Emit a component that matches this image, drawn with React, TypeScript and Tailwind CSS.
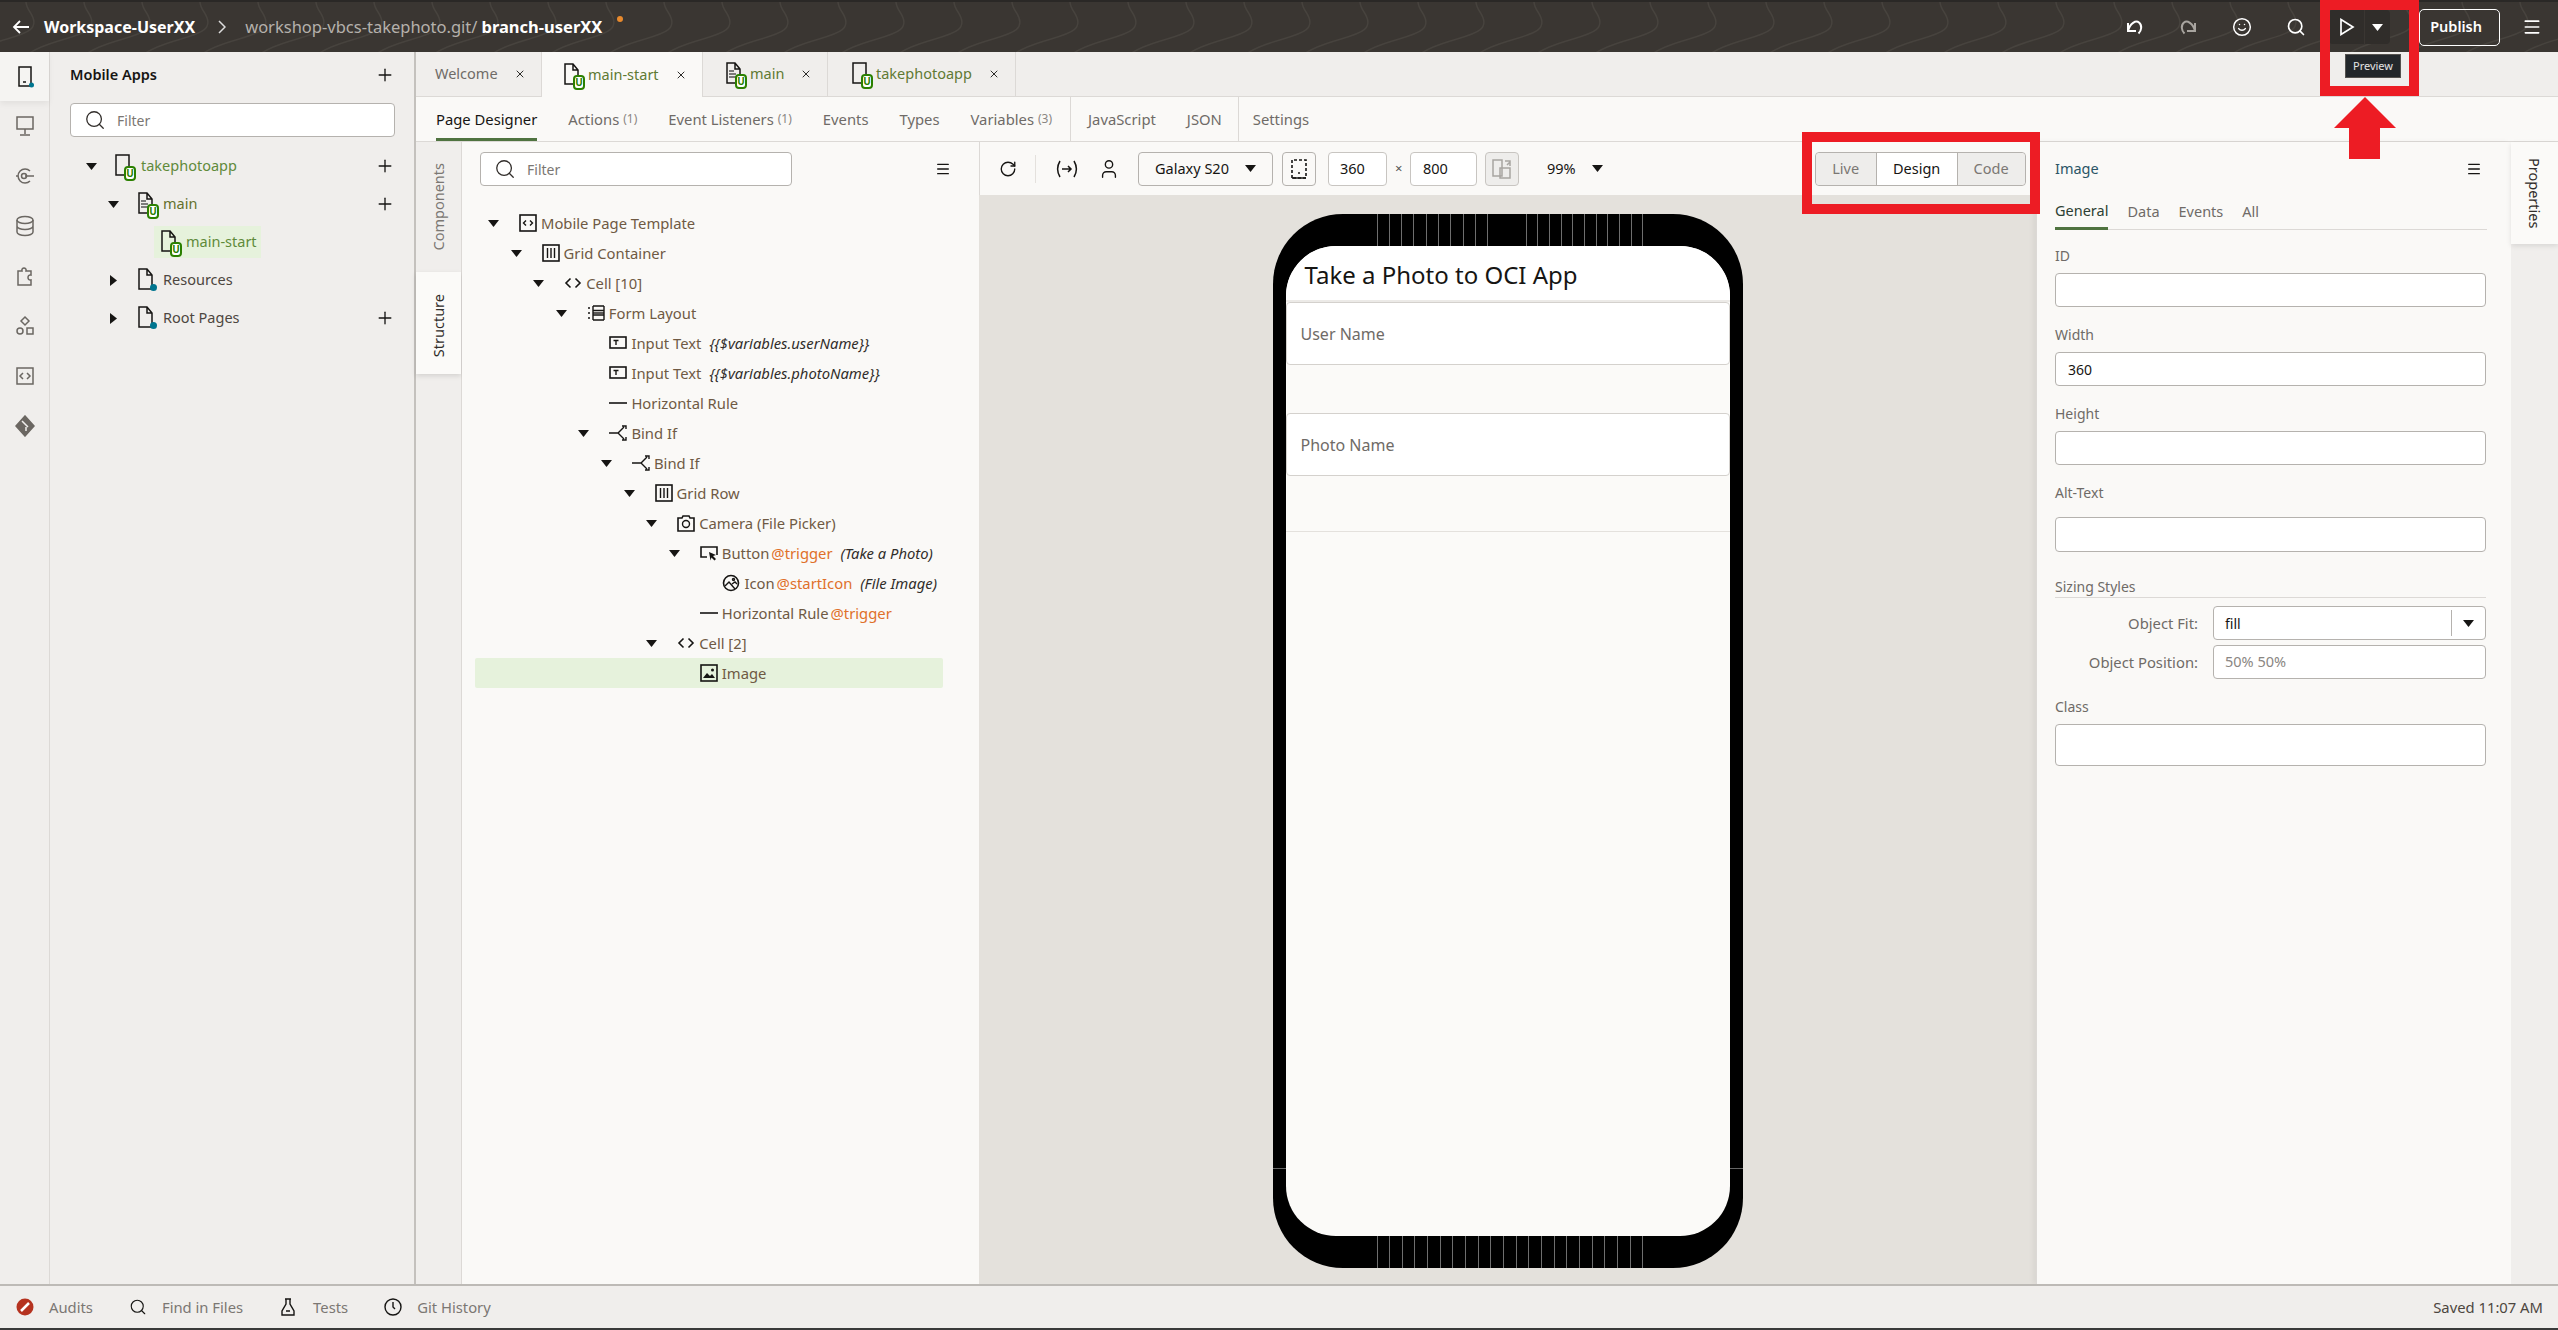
// App.tsx - Visual Builder page designer
import { Search, Plus, X, Menu, Smile, RotateCw, User } from "lucide-react";
import type { ReactNode } from "react";

const font = { fontFamily: '"Noto Sans", sans-serif' };

const CaretDown = ({ className = "" }: { className?: string }) => (
  <svg width="11" height="7" viewBox="0 0 11 7" className={className}>
    <path d="M0 0h11L5.5 7z" fill="#161513" />
  </svg>
);

const CaretRight = () => (
  <svg width="7" height="11" viewBox="0 0 7 11">
    <path d="M0 0l7 5.500L0 11z" fill="#161513" />
  </svg>
);

const GitBadge = () => (
  <svg width="12" height="15" viewBox="0 0 12 15" className="absolute -right-[5px] -bottom-[3px]">
    <rect x="1" y="1" width="10" height="13" rx="3" fill="#fff" stroke="#2b8000" strokeWidth="2" />
    <text x="6" y="11" textAnchor="middle" fontSize="10" fontWeight="700" fill="#2b8000" fontFamily="Noto Sans">
      U
    </text>
  </svg>
);

const PageIcon = ({ kind }: { kind: "phone" | "page" | "lines" | "folder" }) => (
  <span className="relative inline-block h-[24px] w-[16px] shrink-0">
    <svg width="15" height="22" viewBox="0 0 15 22" fill="none" stroke="#161513" strokeWidth="1.500">
      {kind === "phone" && <rect x="1" y="1" width="13" height="20" />}
      {kind !== "phone" && <path d="M1 1h8l5 6v14H1zM9 1v6h5" />}
      {kind === "lines" && <path d="M3 9h5M3 12h7M3 15h7" stroke="#555" />}
    </svg>
    {kind === "folder" ? (
      <span className="absolute -right-[3px] bottom-[1px] h-[7px] w-[7px] rounded-full bg-[#00758f]" />
    ) : (
      <GitBadge />
    )}
  </span>
);

// icons of the structure tree, 18px box
const TreeIcon = ({ name }: { name: string }) => {
  const s = { fill: "none", stroke: "#161513", strokeWidth: 1.4 };
  return (
    <svg width="18" height="18" viewBox="0 0 18 18" className="shrink-0">
      {name === "template" && (
        <g {...s}>
          <rect x="1" y="1" width="16" height="16" strokeWidth="1.600" />
          <path d="M7 6.500L4.500 9 7 11.500M11 6.500L13.500 9 11 11.500" />
        </g>
      )}
      {name === "grid" && (
        <g {...s}>
          <rect x="1" y="1" width="16" height="16" strokeWidth="1.600" />
          <path d="M5.500 4v10M9 4v10M12.500 4v10" />
        </g>
      )}
      {name === "cell" && (
        <g {...s} strokeWidth="1.600">
          <path d="M6.500 4.500L2 9l4.500 4.500M11.500 4.500L16 9l-4.500 4.500" />
        </g>
      )}
      {name === "form" && (
        <g {...s}>
          <path d="M6 2h11M6 6.500h11M6 11h11M6 16h11M6 2v14M17 2v14M1 4h2M1 9h2M1 14h2" />
          <path d="M6 9h11" />
        </g>
      )}
      {name === "input" && (
        <g {...s}>
          <rect x="1" y="3" width="16" height="11" strokeWidth="1.600" />
          <path d="M4.500 6.500h5M7 6.500v4.500" />
        </g>
      )}
      {name === "rule" && <path d="M0 9h18" stroke="#161513" strokeWidth="1.600" />}
      {name === "bind" && (
        <g {...s}>
          <path d="M0 9h9l6-6M9 9l6 6M13 2h4v3M13 16h4v-3" />
        </g>
      )}
      {name === "camera" && (
        <g {...s}>
          <path d="M1 4h4l1-2h6l1 2h4v13H1z" strokeWidth="1.600" />
          <circle cx="9" cy="10" r="3.500" />
        </g>
      )}
      {name === "button" && (
        <g {...s}>
          <path d="M7 13H1V3h16v8" strokeWidth="1.600" />
          <path d="M9 8l7 3-3 1 3 3-1.500 1.500-3-3-1 3z" fill="#161513" stroke="none" />
        </g>
      )}
      {name === "icon" && (
        <g {...s}>
          <circle cx="9" cy="9" r="7.500" strokeWidth="1.600" />
          <path d="M3 12l4-4 6 7M10 10l3-2 2 2" />
          <circle cx="11.500" cy="5.500" r="1" />
        </g>
      )}
      {name === "image" && (
        <g>
          <rect x="1" y="1" width="16" height="16" {...s} strokeWidth="1.600" />
          <path d="M3 14l4-5 3 3 2-2 3 4z" fill="#161513" />
          <circle cx="12.500" cy="6" r="1.500" fill="#161513" />
        </g>
      )}
    </svg>
  );
};

type Node = { level: number; icon: string; label: string; at?: string; note?: string; caret?: boolean; selected?: boolean };

const nodes: Node[] = [
  { level: 0, icon: "template", label: "Mobile Page Template", caret: true },
  { level: 1, icon: "grid", label: "Grid Container", caret: true },
  { level: 2, icon: "cell", label: "Cell [10]", caret: true },
  { level: 3, icon: "form", label: "Form Layout", caret: true },
  { level: 4, icon: "input", label: "Input Text", note: "{{$variables.userName}}" },
  { level: 4, icon: "input", label: "Input Text", note: "{{$variables.photoName}}" },
  { level: 4, icon: "rule", label: "Horizontal Rule" },
  { level: 4, icon: "bind", label: "Bind If", caret: true },
  { level: 5, icon: "bind", label: "Bind If", caret: true },
  { level: 6, icon: "grid", label: "Grid Row", caret: true },
  { level: 7, icon: "camera", label: "Camera (File Picker)", caret: true },
  { level: 8, icon: "button", label: "Button", at: "@trigger", note: "(Take a Photo)", caret: true },
  { level: 9, icon: "icon", label: "Icon", at: "@startIcon", note: "(File Image)" },
  { level: 8, icon: "rule", label: "Horizontal Rule", at: "@trigger" },
  { level: 7, icon: "cell", label: "Cell [2]", caret: true },
  { level: 8, icon: "image", label: "Image", selected: true },
];

const TreeRow = ({ node }: { node: Node }) => (
  <div
    className={`flex h-[30px] items-center rounded-[2px] text-[14.800px] text-[#6f5a44] ${node.selected ? "bg-[#e6f2dc]" : ""}`}
    style={{ paddingLeft: 13 + node.level * 22.600 }}
  >
    <span className="flex w-[31px] shrink-0 items-center">{node.caret && <CaretDown />}</span>
    <TreeIcon name={node.icon} />
    <span className="ml-[4px]">{node.label}</span>
    {node.at && <span className="ml-[2px] text-[#e0702a]">{node.at}</span>}
    {node.note && <span className="ml-[8px] italic text-[#312d2a]">{node.note}</span>}
  </div>
);

const FilterBox = ({ className }: { className: string }) => (
  <div className={`flex items-center rounded-[4px] border border-[#b5b2ae] bg-white pl-[13px] ${className}`}>
    <Search size={22} strokeWidth={1.400} className="text-[#312d2a]" />
    <span className="ml-[11px] text-[14px] text-[#7b7773]">Filter</span>
  </div>
);

const tabs = [
  { label: "Welcome", width: "w-[126px] pl-[19px]", textColor: "text-[#6f6b67]" },
  { label: "main-start", width: "w-[161px] pl-[22px]", kind: "page" as const, active: true },
  { label: "main", width: "w-[125px] pl-[23px]", kind: "lines" as const },
  { label: "takephotoapp", width: "w-[188px] pl-[24px]", kind: "phone" as const },
];

const subTabs = [
  { label: "Page Designer", active: true },
  { label: "Actions", count: "(1)" },
  { label: "Event Listeners", count: "(1)" },
  { label: "Events" },
  { label: "Types" },
  { label: "Variables", count: "(3)" },
];

const RailIcon = ({ children, active }: { children: ReactNode; active?: boolean }) => (
  <div className={`relative flex items-center justify-center ${active ? "h-[49px] bg-[#f5f4f2] shadow-[0_3px_6px_rgba(0,0,0,0.06)]" : "h-[50px]"}`}>
    <svg width="20" height="22" viewBox="0 0 20 22" fill="none" stroke={active ? "#161513" : "#6b6762"} strokeWidth="1.500">
      {children}
    </svg>
  </div>
);

const Field = ({ label, value, labelClass = "mt-[16px] mb-[7px]", boxClass = "h-[34px]" }: { label: string; value?: string; labelClass?: string; boxClass?: string }) => (
  <div>
    <div className={`flex h-[22px] items-center text-[14px] text-[#6f6b67] ${labelClass}`}>{label}</div>
    <div className={`flex items-center rounded-[4px] border border-[#b5b2ae] bg-white pl-[12px] text-[14px] text-[#161513] ${boxClass}`}>{value}</div>
  </div>
);

const StatusItem = ({ icon, label, className }: { icon: ReactNode; label: string; className: string }) => (
  <div className={`flex items-center ${className}`}>
    <span className="flex w-[33px] items-center">{icon}</span>
    <span className="text-[14.800px] text-[#7b7773]">{label}</span>
  </div>
);

const Grill = ({ count, width }: { count: number; width: string }) => (
  <div className={`flex h-full justify-between ${width}`}>
    {Array.from({ length: count }).map((_, i) => (
      <span key={i} className="h-full w-px bg-[#6e6e6e]" />
    ))}
  </div>
);

export default function App() {
  return (
    <div className="relative flex h-[1330px] w-[2558px] flex-col overflow-hidden bg-[#f0eeec] text-[#161513]" style={font}>
      {/* Header */}
      <header className="relative flex h-[52px] shrink-0 items-center overflow-hidden border-t-2 border-[#2a2826] bg-[#3a3632] text-white">
        <svg className="absolute inset-0" width="2558" height="52" fill="none" stroke="#47433e" strokeWidth="1.500">
          {Array.from({ length: 46 }).map((_, i) => (
            <path key={i} d={`M${i * 58 - 40} 60 C${i * 58 - 10} 30 ${i * 58 + 50} 40 ${i * 58 + 30} 10 S${i * 58 + 70} -10 ${i * 58 + 100} -10`} />
          ))}
        </svg>
        <div className="relative flex w-full items-center">
          <svg width="20" height="20" viewBox="0 0 20 20" fill="none" stroke="#fff" strokeWidth="1.800" className="ml-[11px]">
            <path d="M18 10H3M9 4l-6 6 6 6" />
          </svg>
          <span className="ml-[13px] text-[16px] font-bold">Workspace-UserXX</span>
          <svg width="8" height="14" viewBox="0 0 8 14" fill="none" stroke="#ddd" strokeWidth="1.500" className="ml-[23px]">
            <path d="M1 1l6 6-6 6" />
          </svg>
          <span className="ml-[19px] text-[16.500px] text-[#b5b1ac]">workshop-vbcs-takephoto.git/</span>
          <span className="ml-[4px] text-[16.500px] font-bold">branch-userXX</span>
          <span className="mb-[16px] ml-[15px] h-[6px] w-[6px] rounded-full bg-[#e88a2d]" />

          <div className="ml-auto flex items-center">
            <svg width="20" height="20" viewBox="0 0 20 20" fill="none" stroke="#fff" strokeWidth="2">
              <path d="M3 6v8h8M3 14C5 6 11 3 14 5.500c3.500 3 2.500 8-.5 11" />
            </svg>
            <svg width="20" height="20" viewBox="0 0 20 20" fill="none" stroke="#a8a49f" strokeWidth="2" className="ml-[33px]">
              <path d="M17 6v8H9M17 14C15 6 9 3 6 5.500c-3.500 3-2.500 8 .5 11" />
            </svg>
            <Smile size={20} strokeWidth={1.800} className="ml-[34px] text-white" />
            <Search size={20} strokeWidth={2} className="ml-[34px] text-white" />
            <div className="ml-[23px] flex h-[34px] w-[35px] items-center justify-center rounded-l-[4px] bg-[#302d2a]">
              <svg width="16" height="18" viewBox="0 0 16 18" fill="none" stroke="#fff" strokeWidth="1.700">
                <path d="M2 1.500L14 9 2 16.500z" />
              </svg>
            </div>
            <div className="ml-px flex h-[34px] w-[25px] items-center justify-center rounded-r-[4px] bg-[#302d2a]">
              <CaretDown className="[&>path]:fill-white" />
            </div>
            <div className="ml-[29px] flex h-[37px] w-[81px] items-center justify-end rounded-[5px] border border-white pr-[17px] text-[14.500px] font-semibold">Publish</div>
            <Menu size={20} strokeWidth={2} className="ml-[22px] mr-[16px] text-white" />
          </div>
        </div>
      </header>

      <div className="flex min-h-0 flex-1">
        {/* Icon rail */}
        <nav className="w-[50px] shrink-0 border-r border-[#dcd9d6]">
          <RailIcon active>
            <rect x="4" y="1" width="12" height="19" />
            <path d="M8 16h3" />
            <circle cx="16.500" cy="19" r="2.500" fill="#00758f" stroke="none" />
          </RailIcon>
          <RailIcon>
            <path d="M2 2h16v12H2zM10 14v5M5 20h10" />
          </RailIcon>
          <RailIcon>
            <path d="M15 6a7 7 0 1 0 0 10M10 11h9M1 11h2" />
            <circle cx="9" cy="11" r="2.500" />
          </RailIcon>
          <RailIcon>
            <ellipse cx="10" cy="5" rx="8" ry="3.500" />
            <path d="M2 5v12c0 2 3.500 3.500 8 3.500s8-1.500 8-3.500V5M2 11c0 2 3.500 3.500 8 3.500s8-1.500 8-3.500" />
          </RailIcon>
          <RailIcon>
            <path d="M3 6h4c-1-4 5-4 4 0h5v4c-4-1-4 6 0 5v5H3z" />
          </RailIcon>
          <RailIcon>
            <path d="M10 2l4 4-4 4-4-4z" />
            <circle cx="5" cy="16" r="3" />
            <rect x="12" y="13" width="6" height="6" />
          </RailIcon>
          <RailIcon>
            <rect x="2" y="3" width="16" height="16" />
            <path d="M8 8l-3 3 3 3M12 8l3 3-3 3" />
          </RailIcon>
          <RailIcon>
            <path d="M10 1l9 10-9 10L1 11z" fill="#6b6762" />
            <path d="M7 6l6 6M11 12v4" stroke="#f0eeec" />
          </RailIcon>
        </nav>

        {/* Navigator */}
        <aside className="w-[366px] shrink-0 border-r-2 border-[#c4c1bd] bg-[#f0eeec] pl-[20px] pr-[20px]">
          <div className="flex h-[45px] items-center justify-between">
            <span className="text-[14.500px] font-semibold">Mobile Apps</span>
            <Plus size={20} strokeWidth={1.600} className="-mr-[1px]" />
          </div>
          <FilterBox className="mt-[6px] h-[34px] w-[325px]" />
          <div className="mt-[10px] text-[14.500px]">
            <div className="flex h-[38px] items-center">
              <span className="ml-[16px] flex w-[29px]"><CaretDown /></span>
              <PageIcon kind="phone" />
              <span className="ml-[10px] text-[#5f8a3a]">takephotoapp</span>
              <Plus size={20} strokeWidth={1.600} className="ml-auto -mr-[1px]" />
            </div>
            <div className="flex h-[38px] items-center">
              <span className="ml-[38px] flex w-[30px]"><CaretDown /></span>
              <PageIcon kind="lines" />
              <span className="ml-[9px] text-[#64712c]">main</span>
              <Plus size={20} strokeWidth={1.600} className="ml-auto -mr-[1px]" />
            </div>
            <div className="flex h-[38px] items-center">
              <div className="ml-[84px] flex h-[32px] w-[107px] items-center bg-[#e6f2dc] pl-[7px]">
                <PageIcon kind="page" />
                <span className="ml-[9px] text-[#5f8a3a]">main-start</span>
              </div>
            </div>
            <div className="flex h-[38px] items-center">
              <span className="ml-[40px] flex w-[28px]"><CaretRight /></span>
              <PageIcon kind="folder" />
              <span className="ml-[9px] text-[#4d4640]">Resources</span>
            </div>
            <div className="flex h-[38px] items-center">
              <span className="ml-[40px] flex w-[28px]"><CaretRight /></span>
              <PageIcon kind="folder" />
              <span className="ml-[9px] text-[#4d4640]">Root Pages</span>
              <Plus size={20} strokeWidth={1.600} className="ml-auto -mr-[1px]" />
            </div>
          </div>
        </aside>

        {/* Editor */}
        <main className="flex min-w-0 flex-1 flex-col">
          <div className="flex h-[45px] shrink-0 border-b border-[#dcd9d6] text-[14.500px]">
            {tabs.map((t) => (
              <div
                key={t.label}
                className={`flex items-center border-r border-[#dcd9d6] ${t.width} ${t.active ? "-mb-px bg-[#faf9f7]" : ""}`}
              >
                {t.kind && <span className="mr-[8px] flex"><PageIcon kind={t.kind} /></span>}
                <span className={t.textColor ?? "text-[#5f7a33]"}>{t.label}</span>
                <X size={12} strokeWidth={1.800} className="ml-[16px]" />
              </div>
            ))}
          </div>

          <div className="flex h-[45px] shrink-0 items-stretch gap-[31px] border-b border-[#dcd9d6] bg-[#faf9f7] pl-[20px] text-[14.800px] text-[#6f6b67]">
            {subTabs.map((t) => (
              <div key={t.label} className={`flex items-center border-b-[3px] pt-[3px] ${t.active ? "border-[#4f7340] text-[#161513]" : "border-transparent"}`}>
                {t.label}
                {t.count && <span className="ml-[4px] text-[12px] text-[#8a8682]">{t.count}</span>}
              </div>
            ))}
            <div className="-ml-[13px] flex items-center border-l border-[#dcd9d6] pl-[17px]">JavaScript</div>
            <div className="flex items-center">JSON</div>
            <div className="-ml-[15px] flex items-center border-l border-[#dcd9d6] pl-[14px]">Settings</div>
          </div>

          <div className="flex min-h-0 flex-1">
            {/* Components / Structure tabs */}
            <div className="w-[46px] shrink-0 border-r border-[#dcd9d6] text-[14.500px]">
              <div className="flex h-[130px] items-center justify-center text-[#7b7773]">
                <span className="rotate-180 [writing-mode:vertical-rl]">Components</span>
              </div>
              <div className="flex h-[102px] items-center justify-center bg-[#fbfaf8] pt-[5px] text-[#312d2a] shadow-[0_2px_5px_rgba(0,0,0,0.12)]">
                <span className="rotate-180 [writing-mode:vertical-rl]">Structure</span>
              </div>
            </div>

            {/* Structure panel */}
            <section className="w-[517px] shrink-0 bg-[#faf9f7] pl-[13px] pr-[2px] pt-[10px]">
              <div className="ml-[5px] flex items-center">
                <FilterBox className="h-[34px] w-[312px]" />
                <Menu size={16} strokeWidth={2} className="ml-[143px]" />
              </div>
              <div className="mt-[22px] w-[468px]">
                {nodes.map((n, i) => (
                  <TreeRow key={i} node={n} />
                ))}
              </div>
            </section>

            {/* Canvas */}
            <section className="flex min-w-0 flex-1 flex-col">
              <div className="flex h-[53px] shrink-0 items-center border-l border-[#dcd9d6] bg-[#faf9f7] pl-[19px] text-[14.500px]">
                <RotateCw size={18} strokeWidth={1.800} />
                <span className="ml-[18px] h-[28px] w-px bg-[#e4e1dd]" />
                <svg width="22" height="20" viewBox="0 0 22 20" fill="none" stroke="#161513" strokeWidth="1.500" className="ml-[20px]">
                  <path d="M4 2C1 7 1 13 4 18M18 2c3 5 3 11 0 16M6 10h9M12 7l3 3-3 3" />
                </svg>
                <User size={22} strokeWidth={1.500} className="ml-[20px]" />
                <div className="ml-[18px] flex h-[34px] w-[135px] items-center rounded-[4px] border border-[#b5b2ae] pl-[16px]">
                  Galaxy S20
                  <CaretDown className="ml-[16px]" />
                </div>
                <div className="ml-[9px] flex h-[34px] w-[34px] items-center justify-center rounded-[4px] border border-[#b5b2ae]">
                  <svg width="16" height="20" viewBox="0 0 16 20" fill="none" stroke="#161513" strokeWidth="1.600">
                    <path d="M1 19V1h14v18H1" strokeDasharray="3 2" />
                    <path d="M1 19h14M7 14h2" />
                  </svg>
                </div>
                <div className="ml-[12px] flex h-[34px] w-[59px] items-center rounded-[4px] border border-[#c8c5c1] bg-white pl-[11px]">360</div>
                <span className="mx-[8px] w-[7px] text-[13px] text-[#555]">×</span>
                <div className="flex h-[34px] w-[67px] items-center rounded-[4px] border border-[#c8c5c1] bg-white pl-[12px]">800</div>
                <div className="ml-[8px] flex h-[34px] w-[34px] items-center justify-center rounded-[4px] border border-[#c8c5c1] bg-[#eeedeb]">
                  <svg width="20" height="20" viewBox="0 0 20 20" fill="none" stroke="#a8a5a1" strokeWidth="1.500">
                    <path d="M1 1h9v16H1zM8 9h10v10H8zM13 2h5v5M15 6l3-3" />
                  </svg>
                </div>
                <span className="ml-[28px]">99%</span>
                <CaretDown className="ml-[16px]" />
                <div className="ml-[212px] flex h-[34px] w-[211px] rounded-[4px] border border-[#b5b2ae] text-[#7b7773]">
                  <div className="flex w-[60px] items-center justify-center rounded-l-[4px] bg-[#eeedeb]">Live</div>
                  <div className="flex w-[82px] items-center justify-center border-x border-[#b5b2ae] bg-white text-[#161513]">Design</div>
                  <div className="flex flex-1 items-center justify-center rounded-r-[4px] bg-[#eeedeb]">Code</div>
                </div>
              </div>

              <div className="flex min-h-0 flex-1 justify-center bg-[#e4e1dc] pt-[19px]">
                {/* Phone */}
                <div className="relative h-[1054px] w-[470px] shrink-0 rounded-[70px] bg-black px-[13px] py-[32px]">
                  <div className="absolute left-[104px] top-0 flex h-[32px]">
                    <Grill count={10} width="w-[112px]" />
                    <Grill count={11} width="ml-[37px] w-[118px]" />
                  </div>
                  <div className="absolute bottom-0 left-[104px] h-[32px]">
                    <Grill count={22} width="w-[267px]" />
                  </div>
                  <span className="absolute bottom-[99px] left-0 h-px w-[13px] bg-[#666]" />
                  <span className="absolute bottom-[99px] right-0 h-px w-[13px] bg-[#666]" />

                  <div className="h-full overflow-hidden rounded-[50px] bg-[#fbfaf8]">
                    <div className="flex h-[56px] items-center border-b-2 border-[#eceae7] bg-white pl-[19px] pt-[4px] text-[24px] leading-none text-[#161513]">
                      Take a Photo to OCI App
                    </div>
                    <div className="flex h-[63px] items-center rounded-[4px] border border-[#d4d1cd] bg-white pl-[14px] text-[16px] text-[#6f6b67]">User Name</div>
                    <div className="h-[48px]" />
                    <div className="flex h-[63px] items-center rounded-[4px] border border-[#d4d1cd] bg-white pl-[14px] text-[16px] text-[#6f6b67]">Photo Name</div>
                    <div className="h-[56px] border-b border-[#e4e1dd]" />
                  </div>
                </div>
              </div>
            </section>

            {/* Properties */}
            <section className="w-[475px] shrink-0 border-l border-[#dcd9d6] bg-[#faf9f7] pl-[18px] pr-[24px] shadow-[-3px_0_5px_rgba(0,0,0,0.05)]">
              <div className="flex h-[52px] items-center justify-between pr-[2px] pt-[2px] text-[14.500px] text-[#2b5566]">
                Image
                <Menu size={16} strokeWidth={2} className="mr-[3px] text-[#161513]" />
              </div>
              <div className="flex h-[36px] gap-[19px] border-b border-[#dcd9d6] text-[14.500px] text-[#6f6b67]">
                <div className="-mb-px flex items-center border-b-[3px] border-[#4f7340] text-[#2d3f33]">General</div>
                <div className="flex items-center">Data</div>
                <div className="flex items-center">Events</div>
                <div className="flex items-center">All</div>
              </div>
              <div className="w-[431px] pt-[14px]">
                <Field label="ID" labelClass="mb-[7px]" />
                <Field label="Width" value="360" />
                <Field label="Height" />
                <Field label="Alt-Text" labelClass="mt-[16px] mb-[14px]" boxClass="h-[35px]" />
                <div className="mt-[23px] flex h-[23px] items-center border-b border-[#dcd9d6] text-[14px] text-[#6f6b67]">Sizing Styles</div>
                <div className="mt-[8px] flex h-[34px] items-center">
                  <span className="w-[143px] text-right text-[14.800px] text-[#6f6b67]">Object Fit:</span>
                  <div className="ml-[15px] flex h-full flex-1 items-center rounded-[4px] border border-[#b5b2ae] bg-white pl-[11px] text-[14px]">
                    fill
                    <span className="ml-auto h-[26px] w-px bg-[#b5b2ae]" />
                    <span className="flex w-[33px] justify-center"><CaretDown /></span>
                  </div>
                </div>
                <div className="mt-[5px] flex h-[34px] items-center">
                  <span className="w-[143px] text-right text-[14.800px] text-[#6f6b67]">Object Position:</span>
                  <div className="ml-[15px] flex h-full flex-1 items-center rounded-[4px] border border-[#b5b2ae] bg-white pl-[11px] text-[14.500px] text-[#8a8682]">50% 50%</div>
                </div>
                <Field label="Class" boxClass="h-[42px]" />
              </div>
            </section>

            <div className="w-[47px] shrink-0 bg-[#f0eeec]">
              <div className="flex h-[102px] justify-center bg-[#fbfaf8] pl-[-1px] pt-[16px] text-[14.500px] text-[#312d2a] shadow-[0_2px_5px_rgba(0,0,0,0.1)]">
                <span className="[writing-mode:vertical-rl]">Properties</span>
              </div>
            </div>
          </div>
        </main>
      </div>

      {/* Status bar */}
      <footer className="flex h-[46px] shrink-0 items-center border-t-2 border-b-2 border-t-[#bdbab6] border-b-[#3a3a3a] bg-[#f0eeec]">
        <StatusItem
          className="ml-[16px]"
          label="Audits"
          icon={
            <svg width="18" height="18" viewBox="0 0 18 18">
              <circle cx="9" cy="9" r="8.500" fill="#b5321f" />
              <path d="M5 13l8-8" stroke="#fff" strokeWidth="2.500" />
            </svg>
          }
        />
        <StatusItem className="ml-[36px]" label="Find in Files" icon={<Search size={18} strokeWidth={1.500} className="text-[#161513]" />} />
        <StatusItem
          className="ml-[37px]"
          label="Tests"
          icon={
            <svg width="16" height="18" viewBox="0 0 16 18" fill="none" stroke="#161513" strokeWidth="1.400">
              <path d="M5 1h6M6 1v5L2 13v4h12v-4L10 6V1M6 13h4" />
            </svg>
          }
        />
        <StatusItem
          className="ml-[36px]"
          label="Git History"
          icon={
            <svg width="18" height="18" viewBox="0 0 18 18" fill="none" stroke="#161513" strokeWidth="1.400">
              <circle cx="9" cy="9" r="8" />
              <path d="M9 4v5l2 2" />
            </svg>
          }
        />
        <span className="ml-auto mr-[15px] text-[14.800px] text-[#4d4640]">Saved 11:07 AM</span>
      </footer>

      {/* Tooltip */}
      <div className="absolute left-[2345px] top-[54px] flex h-[24px] w-[56px] items-center justify-center border border-[#55524f] bg-[#23272b] text-[11px] text-[#e4e4e4]">Preview</div>

      {/* Red annotations */}
      <div className="absolute left-[1802px] top-[132px] h-[82px] w-[238px] border-[10px] border-[#ed1c24]" />
      <div className="absolute left-[2320px] top-0 h-[96px] w-[99px] border-[10px] border-[#ed1c24]" />
      <svg className="absolute left-[2334px] top-[97px]" width="62" height="62" viewBox="0 0 62 62">
        <path d="M31 0l31 31H46v31H15V31H0z" fill="#ed1c24" />
      </svg>
    </div>
  );
}
